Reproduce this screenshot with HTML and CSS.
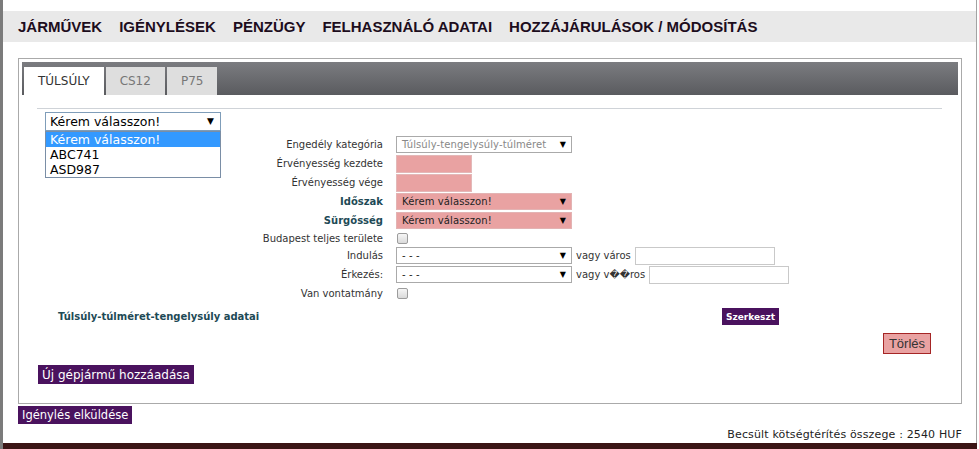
FILE: index.html
```html
<!DOCTYPE html>
<html lang="hu">
<head>
  <meta charset="UTF-8" />
  <meta name="viewport" content="width=device-width, initial-scale=1" />
  <title>Igénylés</title>
  <link rel="stylesheet" href="styles.css">
</head>
<body>

  <div class="page">
    <nav class="nav">
      <a href="#">JÁRMŰVEK</a>
      <a href="#">IGÉNYLÉSEK</a>
      <a href="#">PÉNZÜGY</a>
      <a href="#">FELHASZNÁLÓ ADATAI</a>
      <a href="#">HOZZÁJÁRULÁSOK / MÓDOSÍTÁS</a>
    </nav>

    <div class="box">
      <div class="tabs">
        <div class="tab active">TÚLSÚLY</div>
        <div class="tab">CS12</div>
        <div class="tab">P75</div>
      </div>

      <div class="panel">
        <div class="rule"></div>

        <div class="vehicle">
          <div class="select vehicle-select"><span>Kérem válasszon!</span></div>
          <ul class="dropdown">
            <li class="selected">Kérem válasszon!</li>
            <li>ABC741</li>
            <li>ASD987</li>
          </ul>
        </div>

        <div class="form">
          <label>Engedély kategória</label>
          <div class="field"><div class="select wide disabled"><span>Túlsúly-tengelysúly-túlméret</span></div></div>

          <label>Érvényesség kezdete</label>
          <div class="field"><input type="text" class="date required"></div>

          <label>Érvényesség vége</label>
          <div class="field"><input type="text" class="date required"></div>

          <label class="strong">Időszak</label>
          <div class="field"><div class="select wide required"><span>Kérem válasszon!</span></div></div>

          <label class="strong">Sürgősség</label>
          <div class="field"><div class="select wide required"><span>Kérem válasszon!</span></div></div>

          <label>Budapest teljes területe</label>
          <div class="field"><input type="checkbox"></div>

          <label>Indulás</label>
          <div class="field">
            <div class="select wide"><span>- - -</span></div>
            <span class="or">vagy város</span>
            <input type="text" class="city">
          </div>

          <label>Érkezés:</label>
          <div class="field">
            <div class="select wide"><span>- - -</span></div>
            <span class="or">vagy v��ros</span>
            <input type="text" class="city">
          </div>

          <label>Van vontatmány</label>
          <div class="field"><input type="checkbox"></div>
        </div>

        <div class="data-row">
          <span class="data-title">Túlsúly-túlméret-tengelysúly adatai</span>
          <button class="btn small">Szerkeszt</button>
        </div>

        <div class="delete-row">
          <button class="delete">Törlés</button>
        </div>

        <button class="btn add">Új gépjármű hozzáadása</button>
      </div>
    </div>

    <button class="btn send">Igénylés elküldése</button>

    <p class="cost">Becsült kötségtérítés összege : 2540 HUF</p>
  </div>

  <div class="bottom-bar"></div>

</body>
</html>
```

FILE: styles.css
```css
* {
  box-sizing: border-box;
  margin: 0;
  padding: 0;
}

body {
  width: 979px;
  height: 449px;
  overflow: hidden;
  background: #fff;
  font-family: "DejaVu Sans", Verdana, sans-serif;
  color: #333;
}

.page {
  width: 977px;
  height: 443px;
  border-left: 3px solid #7b7b7b;
  border-right: 1px solid #a3a3a3;
  padding-top: 11px;
}

.nav {
  height: 31px;
  background: #e9e9e9;
  display: flex;
  align-items: center;
  gap: 17px;
  padding-left: 15px;
  font-family: "Liberation Sans", Arial, sans-serif;
  font-size: 15px;
  font-weight: bold;
}

.nav a {
  color: #1d0d1d;
  text-decoration: none;
}

.box {
  margin: 16px 0 0 15px;
  width: 944px;
  height: 346px;
  border: 1px solid #aaa;
  padding: 3px;
}

.tabs {
  height: 33px;
  background: linear-gradient(#7b7c80, #5a5b5f);
  display: flex;
  align-items: flex-end;
  gap: 2px;
  padding-left: 2px;
}

.tab {
  height: 28px;
  line-height: 28px;
  padding: 0 14px;
  font-size: 12px;
  background: #dedede;
  color: #777;
}

.tab.active {
  background: #fff;
  color: #333;
}

.panel {
  padding: 0 16px 0 15px;
}

.rule {
  margin-top: 13px;
  border-top: 1px solid #cfd3d8;
}

.vehicle {
  position: relative;
  margin: 3px 0 0 8px;
  width: 176px;
}

.select {
  position: relative;
  height: 17px;
  line-height: 15px;
  border: 1px solid #aaa;
  background: #fff;
  padding-left: 5px;
  font-size: 10px;
  letter-spacing: 0.1px;
  color: #222;
}

.select::after {
  content: "▼";
  position: absolute;
  right: 5px;
  top: 0;
  font-size: 8px;
  color: #000;
}

.vehicle-select {
  height: 19px;
  line-height: 17px;
  border-color: #7f9db9;
  padding-left: 4px;
  font-size: 12.5px;
  letter-spacing: 0;
  color: #000;
}

.vehicle-select::after {
  right: 6px;
  font-size: 9px;
}

.dropdown {
  position: absolute;
  top: 19px;
  left: 0;
  width: 176px;
  list-style: none;
  background: #fff;
  border: 1px solid #7a8ea6;
  font-size: 12.5px;
  color: #000;
}

.dropdown li {
  height: 15px;
  line-height: 15px;
  padding-left: 4px;
}

.dropdown li.selected {
  background: #3399ff;
  color: #fff;
}

.form {
  margin-top: 4px;
  display: grid;
  grid-template-columns: 346px auto;
  grid-template-rows: 19px 19px 19px 19px 19px 16px 19px 19px 19px;
  column-gap: 13px;
  align-items: center;
  font-size: 10px;
}

.form label {
  text-align: right;
}

.form label.strong {
  font-weight: bold;
  color: #1e4a56;
}

.field {
  display: flex;
  align-items: center;
  gap: 4px;
}

.wide {
  width: 176px;
}

.disabled {
  color: #888;
}

.required {
  background: #e9a2a2;
  border-color: #e3b3b3;
}

.date {
  width: 76px;
  height: 18px;
}

input[type="text"] {
  border: 1px solid #c9c9c9;
  background: #fff;
}

input.required {
  background: #e9a2a2;
  border-color: #e3b8b8;
}

.city {
  width: 140px;
  height: 18px;
}

.or {
  color: #333;
}

input[type="checkbox"] {
  appearance: none;
  width: 11px;
  height: 11px;
  margin-left: 1px;
  border: 1px solid #9c9c9c;
  border-radius: 2px;
  background: linear-gradient(#f6f6f6, #dadada);
}

.data-row {
  margin-top: 5px;
  display: grid;
  grid-template-columns: 664px auto;
  align-items: center;
  padding-left: 21px;
}

.data-title {
  font-size: 10px;
  font-weight: bold;
  color: #1e4a56;
}

.btn {
  border: none;
  background: #4a125e;
  color: #fff;
  font-family: "DejaVu Sans", Verdana, sans-serif;
  cursor: pointer;
}

.btn.small {
  justify-self: start;
  height: 17px;
  padding: 0 4px;
  font-size: 9px;
  font-weight: bold;
}

.delete-row {
  margin-top: 8px;
  text-align: right;
  padding-right: 11px;
}

.delete {
  height: 21px;
  padding: 0 5px;
  border: 1px solid #a52525;
  background: #e9a2a2;
  font-family: "Liberation Sans", Arial, sans-serif;
  font-size: 13px;
  color: #333;
}

.add {
  display: block;
  margin: 11px 0 0 1px;
  height: 19px;
  padding: 0 4px;
  font-size: 12px;
}

.send {
  display: block;
  margin: 2px 0 0 15px;
  height: 18px;
  padding: 0 4px;
  font-size: 11.5px;
}

.cost {
  margin-top: 4px;
  padding-right: 14px;
  text-align: right;
  line-height: 14px;
  font-size: 11px;
  letter-spacing: 0.15px;
  color: #222;
}

.bottom-bar {
  width: 977px;
  height: 6px;
  border-left: 3px solid #7b7b7b;
  background: #3b1515;
}
```
